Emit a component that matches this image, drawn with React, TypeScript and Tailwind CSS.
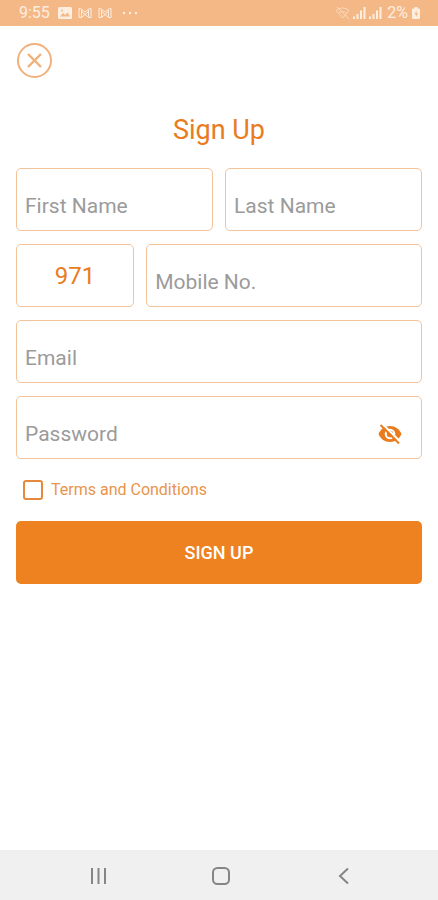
import { useState, type InputHTMLAttributes } from "react"
import { MdVisibility } from "react-icons/md"
import { clsx } from "clsx"

interface FieldProps extends InputHTMLAttributes<HTMLInputElement> {
  label: string
}

function Field({ label, className, ...props }: FieldProps) {
  return (
    <input
      aria-label={label}
      placeholder={label}
      className={clsx(
        "h-[63px] w-full min-w-0 rounded-[5px] border border-[#f3c39a] bg-white px-2 pt-3 text-[21px] text-[#e87c1e] outline-none placeholder:text-[#9b9b9b] focus:border-[#ee8120]",
        className
      )}
      {...props}
    />
  )
}

function MailIcon() {
  return (
    <svg viewBox="0 0 14 12" className="h-3 w-3.5" fill="none" stroke="currentColor">
      <path d="M1 1.500h1.500L7 5l4.500-3.500H13v9h-2.500L7 7.500l-3.500 3H1z" />
      <path d="M3.500 2.500v7.500M10.500 2.500v7.500M3.500 4.500 7 7.500l3.500-3" />
    </svg>
  )
}

function SignalIcon() {
  return (
    <svg viewBox="0 0 14 12" className="h-3 w-3.5" fill="currentColor">
      <path d="M0 9.500h2V12H0zM3.500 7h2v5h-2zM7 3.500h2V12H7zM10.500 0h2v12h-2z" />
    </svg>
  )
}

function EyeOffIcon() {
  return (
    <svg viewBox="0 0 24 24" className="size-6" fill="none">
      <path d="M.500 12C2.500 7 6.800 4 12 4s9.500 3 11.500 8c-2 5-6.300 8-11.500 8S2.500 17 .500 12z" fill="currentColor" />
      <circle cx="12" cy="12" r="5.300" fill="white" />
      <circle cx="12" cy="12" r="3.200" fill="currentColor" />
      <path d="M4.500 2 23 20.500" stroke="white" strokeWidth="2.200" />
      <path d="M2.500 3 21 21.500" stroke="currentColor" strokeWidth="2" />
    </svg>
  )
}

function StatusBar() {
  return (
    <header className="flex h-[26px] items-center justify-between bg-[#f4b886] pr-[18px] pl-[19px] text-base text-[#fdeee0]">
      <div className="flex items-center gap-1.5">
        <span>9:55</span>
        <svg viewBox="0 0 14 12" className="ml-0.5 h-3 w-3.5">
          <rect width="14" height="12" rx="1.500" fill="currentColor" />
          <path d="m2 9.500 3-3.500 2.200 2L9.500 5.500 12 9.500z" fill="#f4b886" />
          <circle cx="4" cy="3.500" r="1" fill="#f4b886" />
        </svg>
        <MailIcon />
        <MailIcon />
        <svg viewBox="0 0 16 4" className="ml-1 h-1 w-4" fill="currentColor">
          <circle cx="2" cy="2" r="1.200" />
          <circle cx="8" cy="2" r="1.200" />
          <circle cx="14" cy="2" r="1.200" />
        </svg>
      </div>
      <div className="flex items-center gap-0.5">
        <svg viewBox="0 0 16 14" className="h-3.5 w-4 opacity-60" fill="none" stroke="currentColor">
          <path d="M1 4.500a9.500 9.500 0 0 1 13 0L8 12zM3.500 7a6 6 0 0 1 8 0M2 1l12 12" />
        </svg>
        <SignalIcon />
        <SignalIcon />
        <span className="ml-0.5">2%</span>
        <svg viewBox="0 0 8 12" className="ml-0.5 h-3 w-2">
          <path d="M2.500 0h3v1.500H7a1 1 0 0 1 1 1V11a1 1 0 0 1-1 1H1a1 1 0 0 1-1-1V2.500a1 1 0 0 1 1-1h1.500z" fill="currentColor" />
          <path d="M4.500 3.500 2.500 7.500H4v2.500l2-4H4.500z" fill="#f4b886" />
        </svg>
      </div>
    </header>
  )
}

function NavBar() {
  return (
    <nav className="grid h-[50px] grid-cols-3 bg-[#f0f0f0] pt-0.5 pr-[34px] pl-[38px] text-[#858585]">
      <button type="button" aria-label="Recent apps" className="flex items-center justify-center">
        <svg viewBox="0 0 18 18" className="size-[18px]" fill="none" stroke="currentColor" strokeWidth="2">
          <path d="M2 1v16M8.500 1v16M15 1v16" />
        </svg>
      </button>
      <button type="button" aria-label="Home" className="flex items-center justify-center">
        <svg viewBox="0 0 18 18" className="size-[18px]" fill="none" stroke="currentColor" strokeWidth="2">
          <rect x="1" y="1" width="16" height="16" rx="4.500" />
        </svg>
      </button>
      <button type="button" aria-label="Back" className="flex items-center justify-center">
        <svg viewBox="0 0 18 18" className="size-[18px]" fill="none" stroke="currentColor" strokeWidth="2">
          <path d="M14 1.500 6 9l8 7.500" />
        </svg>
      </button>
    </nav>
  )
}

export default function App() {
  const [showPassword, setShowPassword] = useState(false)

  return (
    <div className="flex min-h-screen flex-col bg-white font-['Roboto',sans-serif]">
      <StatusBar />
      <main className="flex-1 px-4 pt-4">
        <button type="button" aria-label="Close" className="block text-[#f2b07a]">
          <svg viewBox="0 0 36 36" className="size-9" fill="none" stroke="currentColor" strokeWidth="2">
            <circle cx="18.500" cy="18.500" r="16.500" />
            <path d="m12 12 13 13M25 12 12 25" strokeWidth="2.400" />
          </svg>
        </button>
        <h1 className="mt-9 text-center text-[27px] leading-8 text-[#e87c1e]">Sign Up</h1>

        <form className="mt-[22px] flex flex-col gap-[13px]" onSubmit={(e) => e.preventDefault()}>
          <div className="grid grid-cols-2 gap-3">
            <Field label="First Name" autoComplete="given-name" />
            <Field label="Last Name" autoComplete="family-name" />
          </div>
          <div className="grid grid-cols-[3fr_7fr] gap-3">
            <input
              aria-label="Country code"
              defaultValue="971"
              className="h-[63px] w-full min-w-0 rounded-[5px] border border-[#f3c39a] bg-white text-center text-2xl text-[#e87c1e] outline-none focus:border-[#ee8120]"
            />
            <Field label="Mobile No." type="tel" />
          </div>
          <Field label="Email" type="email" />
          <div className="relative">
            <Field label="Password" type={showPassword ? "text" : "password"} className="pr-14" />
            <button
              type="button"
              aria-label={showPassword ? "Hide password" : "Show password"}
              onClick={() => setShowPassword(!showPassword)}
              className="absolute inset-y-0 right-5 flex items-center pt-3 text-[#e87c1e]"
            >
              {showPassword ? <MdVisibility className="size-6" /> : <EyeOffIcon />}
            </button>
          </div>

          <label className="my-2 flex h-5 items-center gap-2 self-start pl-[7px] text-base text-[#e8944c]">
            <input
              type="checkbox"
              className="size-5 appearance-none rounded-[3px] border-2 border-[#e58a3c] checked:bg-[#ee8120]"
            />
            Terms and Conditions
          </label>

          <button type="submit" className="h-[63px] rounded-[5px] bg-[#ee8120] text-lg font-medium text-white">
            SIGN UP
          </button>
        </form>
      </main>
      <NavBar />
    </div>
  )
}
